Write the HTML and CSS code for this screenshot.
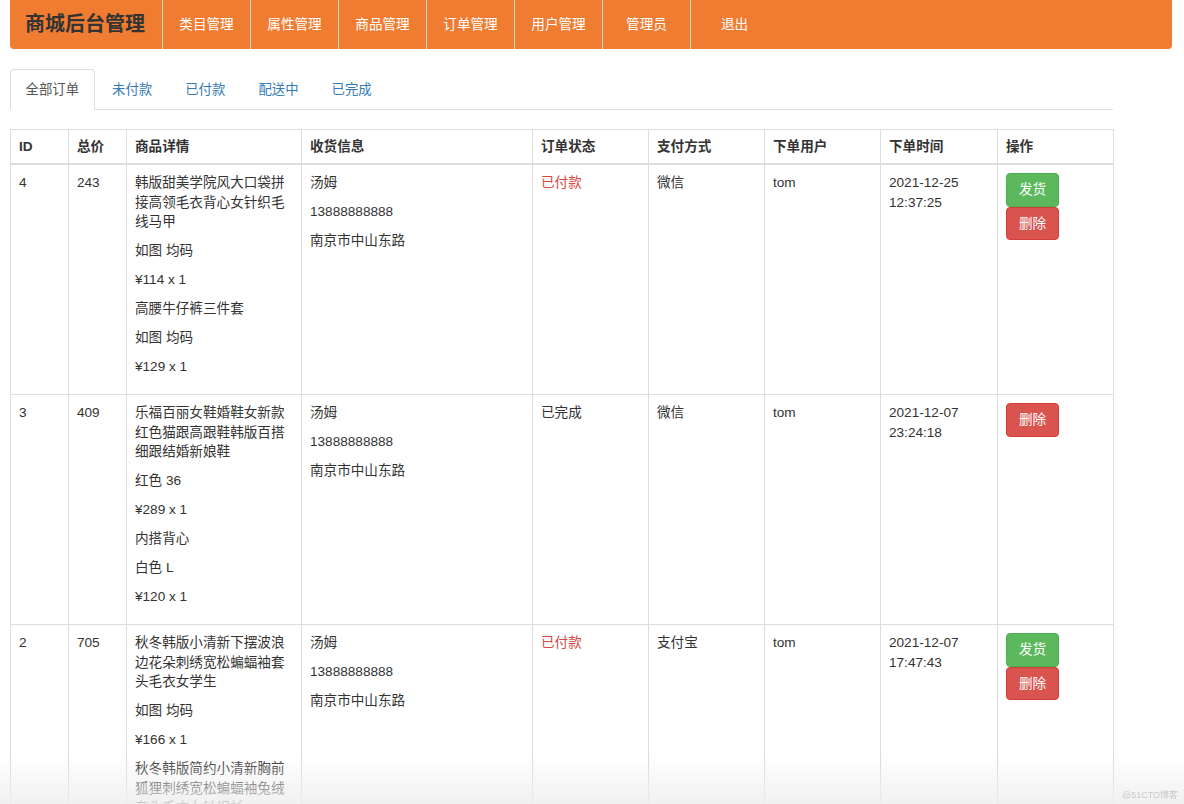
FILE: index.html
```html
<!DOCTYPE html>
<html lang="zh-CN">
<head>
<meta charset="utf-8">
<title>商城后台管理</title>
<link rel="stylesheet" href="styles.css">
</head>
<body>
<div class="page">
  <nav class="navbar">
    <div class="brand">商城后台管理</div>
    <a class="nav-item" href="#">类目管理</a>
    <a class="nav-item" href="#">属性管理</a>
    <a class="nav-item" href="#">商品管理</a>
    <a class="nav-item" href="#">订单管理</a>
    <a class="nav-item" href="#">用户管理</a>
    <a class="nav-item" href="#">管理员</a>
    <a class="nav-item last" href="#">退出</a>
  </nav>

  <ul class="tabs">
    <li class="tab active"><a href="#">全部订单</a></li>
    <li class="tab"><a href="#">未付款</a></li>
    <li class="tab"><a href="#">已付款</a></li>
    <li class="tab"><a href="#">配送中</a></li>
    <li class="tab"><a href="#">已完成</a></li>
  </ul>

  <table class="orders">
    <colgroup>
      <col class="c-id"><col class="c-price"><col class="c-goods"><col class="c-addr"><col class="c-status"><col class="c-pay"><col class="c-user"><col class="c-time"><col class="c-op">
    </colgroup>
    <thead>
      <tr>
        <th>ID</th><th>总价</th><th>商品详情</th><th>收货信息</th><th>订单状态</th><th>支付方式</th><th>下单用户</th><th>下单时间</th><th>操作</th>
      </tr>
    </thead>
    <tbody>
      <tr>
        <td>4</td>
        <td>243</td>
        <td>
          <p>韩版甜美学院风大口袋拼接高领毛衣背心女针织毛线马甲</p>
          <p>如图 均码</p>
          <p>¥114 x 1</p>
          <p>高腰牛仔裤三件套</p>
          <p>如图 均码</p>
          <p>¥129 x 1</p>
        </td>
        <td>
          <p>汤姆</p>
          <p>13888888888</p>
          <p>南京市中山东路</p>
        </td>
        <td class="danger">已付款</td>
        <td>微信</td>
        <td>tom</td>
        <td>2021-12-25 12:37:25</td>
        <td>
          <button class="btn btn-success">发货</button>
          <button class="btn btn-danger">删除</button>
        </td>
      </tr>
      <tr>
        <td>3</td>
        <td>409</td>
        <td>
          <p>乐福百丽女鞋婚鞋女新款红色猫跟高跟鞋韩版百搭细跟结婚新娘鞋</p>
          <p>红色 36</p>
          <p>¥289 x 1</p>
          <p>内搭背心</p>
          <p>白色 L</p>
          <p>¥120 x 1</p>
        </td>
        <td>
          <p>汤姆</p>
          <p>13888888888</p>
          <p>南京市中山东路</p>
        </td>
        <td>已完成</td>
        <td>微信</td>
        <td>tom</td>
        <td>2021-12-07 23:24:18</td>
        <td>
          <button class="btn btn-danger">删除</button>
        </td>
      </tr>
      <tr>
        <td>2</td>
        <td>705</td>
        <td>
          <p>秋冬韩版小清新下摆波浪边花朵刺绣宽松蝙蝠袖套头毛衣女学生</p>
          <p>如图 均码</p>
          <p>¥166 x 1</p>
          <p>秋冬韩版简约小清新胸前狐狸刺绣宽松蝙蝠袖兔绒套头毛衣女针织衫</p>
          <p>如图 均码</p>
          <p>¥539 x 1</p>
        </td>
        <td>
          <p>汤姆</p>
          <p>13888888888</p>
          <p>南京市中山东路</p>
        </td>
        <td class="danger">已付款</td>
        <td>支付宝</td>
        <td>tom</td>
        <td>2021-12-07 17:47:43</td>
        <td>
          <button class="btn btn-success">发货</button>
          <button class="btn btn-danger">删除</button>
        </td>
      </tr>
    </tbody>
  </table>
</div>
<div class="fade"></div>
<div class="watermark">@51CTO博客</div>
</body>
</html>
```

FILE: styles.css
```css
html, body {
  margin: 0;
  padding: 0;
  overflow: hidden;
  background: #fff;
}

body {
  font-family: "Liberation Sans", "Noto Sans CJK SC", sans-serif;
  font-size: 13.6px;
  line-height: 19.5px;
  color: #333;
}

.page {
  padding: 0 12px 0 10px;
}

/* ---------- navbar ---------- */
.navbar {
  display: flex;
  align-items: stretch;
  height: 49px;
  background: #f07c32;
  border-radius: 0 0 4px 4px;
}

.brand {
  width: 122px;
  padding: 0 15px;
  line-height: 49px;
  font-size: 20px;
  font-weight: bold;
  color: #333;
  border-right: 1px solid #f6d3b8;
  white-space: nowrap;
}

.nav-item {
  width: 87px;
  line-height: 49px;
  text-align: center;
  color: #fff;
  text-decoration: none;
  font-size: 13.6px;
  border-right: 1px solid #f6d3b8;
}

.nav-item.last {
  border-right: none;
}

/* ---------- tabs ---------- */
.tabs {
  display: flex;
  list-style: none;
  margin: 20px 0 0 0;
  padding: 0;
  width: 1103px;
  border-bottom: 1px solid #ddd;
}

.tab {
  margin-right: 2px;
  margin-bottom: -1px;
}

.tab a {
  display: block;
  padding: 9.5px 14.5px;
  border: 1px solid transparent;
  border-radius: 4px 4px 0 0;
  color: #337ab7;
  text-decoration: none;
  font-size: 13.4px;
}

.tab.active a {
  color: #555;
  background: #fff;
  border-color: #ddd;
  border-bottom-color: transparent;
}

/* ---------- table ---------- */
.orders {
  margin-top: 19px;
  width: 1103px;
  border-collapse: collapse;
  table-layout: fixed;
  border: 1px solid #ddd;
}

.c-id { width: 58px; }
.c-price { width: 58px; }
.c-goods { width: 175px; }
.c-addr { width: 231px; }
.c-status { width: 116px; }
.c-pay { width: 116px; }
.c-user { width: 116px; }
.c-time { width: 117px; }
.c-op { width: 116px; }

.orders th,
.orders td {
  border: 1px solid #ddd;
  padding: 8px;
  text-align: left;
  vertical-align: top;
}

.orders th {
  font-weight: bold;
  border-bottom: 2px solid #ddd;
  padding-top: 7px;
  padding-bottom: 7px;
}

.orders p {
  margin: 0 0 9.5px 0;
}

.danger {
  color: #d9453f;
}

/* ---------- buttons ---------- */
.btn {
  display: block;
  padding: 6px 12px;
  font-family: inherit;
  font-size: 13.6px;
  line-height: 19.5px;
  color: #fff;
  border: 1px solid transparent;
  border-radius: 4px;
  cursor: pointer;
}

.btn-success {
  background: #5cb85c;
  border-color: #4cae4c;
}

.btn-danger {
  background: #d9534f;
  border-color: #d43f3a;
}

/* ---------- screenshot fade & watermark ---------- */
.fade {
  position: fixed;
  left: 0;
  right: 0;
  bottom: 0;
  height: 48px;
  background: linear-gradient(to bottom, rgba(255, 255, 255, 0), rgba(238, 238, 238, 0.85));
  pointer-events: none;
}

.watermark {
  position: fixed;
  right: 6px;
  bottom: 3px;
  font-size: 9px;
  line-height: 12px;
  color: #c8c8c8;
}
```
